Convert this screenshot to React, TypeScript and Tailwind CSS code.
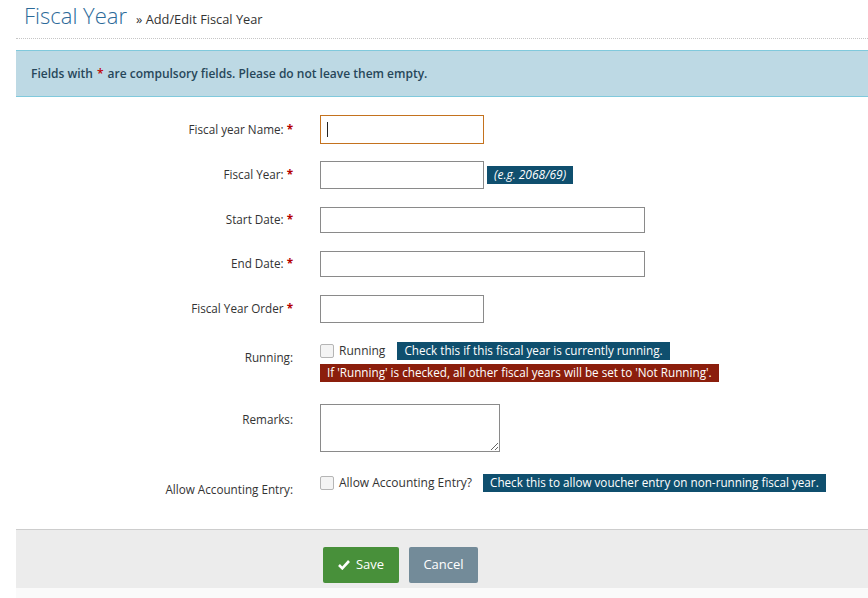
import React from "react";

const font = { fontFamily: '"Open Sans", "Noto Sans", sans-serif' };

function Req() {
  return <span className="text-[#b40000] font-bold ml-[3px]">*</span>;
}

function Label({ text, req, top }: { text: string; req?: boolean; top?: boolean }) {
  return (
    <div className={`w-[277px] shrink-0 text-right text-[11.7px] text-[#333] ${top ? "pt-[7px]" : ""}`}>
      {text}
      {req && <Req />}
    </div>
  );
}

function Badge({ children, red }: { children: React.ReactNode; red?: boolean }) {
  return (
    <span
      className={`inline-flex items-center h-[18px] px-[7px] text-[11.7px] text-white leading-none ${
        red ? "bg-[#8b1e0c]" : "bg-[#0f4f6e]"
      }`}
    >
      {children}
    </span>
  );
}

function Check() {
  return <span className="inline-block w-[14px] h-[14px] border border-[#b5b5b5] bg-[#f4f4f4] rounded-[2px]" />;
}

export default function App() {
  return (
    <div className="w-[868px] h-[598px] bg-white overflow-hidden" style={font}>
      <div className="flex items-baseline pl-[24px] h-[38px]">
        <h1 className="text-[22px] font-light text-[#2c6a99] leading-[30px]">Fiscal Year</h1>
        <span className="ml-[9px] text-[12.8px] text-[#333]">» Add/Edit Fiscal Year</span>
      </div>
      <div className="ml-[16px] border-t border-dotted border-[#c6c6c6]" />

      <div className="ml-[16px] mt-[11px] h-[47px] bg-[#bdd9e4] border-y border-[#80c9dc] flex items-center pl-[15px] text-[12px] font-semibold text-[#27475a]">
        Fields with <span className="text-[#c00000] mx-[4px]">*</span> are compulsory fields. Please do not leave them
        empty.
      </div>

      <div className="pl-[16px] pt-[18px]">
        <div className="flex items-center h-[29px]">
          <Label text="Fiscal year Name:" req />
          <div className="relative ml-[27px]">
            <input className="block w-[164px] h-[29px] border border-[#c4721e] outline-none" />
            <span className="absolute left-[7px] top-[7px] w-px h-[15px] bg-[#222]" />
          </div>
        </div>

        <div className="flex items-center h-[28px] mt-[17px]">
          <Label text="Fiscal Year:" req />
          <input className="ml-[27px] w-[164px] h-[28px] border border-[#8a8a8a] outline-none" />
          <span className="ml-[3px] inline-flex items-center h-[18px] px-[7px] bg-[#0f4f6e] text-white text-[12px] italic">
            (e.g. 2068/69)
          </span>
        </div>

        <div className="flex items-center h-[26px] mt-[18px]">
          <Label text="Start Date:" req />
          <input className="ml-[27px] w-[325px] h-[26px] border border-[#8a8a8a] outline-none" />
        </div>

        <div className="flex items-center h-[26px] mt-[18px]">
          <Label text="End Date:" req />
          <input className="ml-[27px] w-[325px] h-[26px] border border-[#8a8a8a] outline-none" />
        </div>

        <div className="flex items-center h-[28px] mt-[18px]">
          <Label text="Fiscal Year Order" req />
          <input className="ml-[27px] w-[164px] h-[28px] border border-[#8a8a8a] outline-none" />
        </div>

        <div className="flex items-start mt-[19px]">
          <Label text="Running:" top />
          <div className="ml-[27px] flex flex-col gap-[4px]">
            <div className="flex items-center h-[18px]">
              <Check />
              <span className="ml-[5px] text-[12px] text-[#333]">Running</span>
              <span className="ml-[12px] flex">
                <Badge>Check this if this fiscal year is currently running.</Badge>
              </span>
            </div>
            <div className="flex">
              <Badge red>If 'Running' is checked, all other fiscal years will be set to 'Not Running'.</Badge>
            </div>
          </div>
        </div>

        <div className="flex items-start mt-[22px]">
          <Label text="Remarks:" top />
          <textarea className="block ml-[27px] w-[180px] h-[48px] border border-[#8a8a8a] outline-none" />
        </div>

        <div className="flex items-start mt-[22px]">
          <Label text="Allow Accounting Entry:" top />
          <div className="ml-[27px] flex items-center h-[18px]">
            <Check />
            <span className="ml-[5px] text-[12px] text-[#333]">Allow Accounting Entry?</span>
            <span className="ml-[11px] flex">
              <Badge>Check this to allow voucher entry on non-running fiscal year.</Badge>
            </span>
          </div>
        </div>
      </div>

      <div className="ml-[16px] mt-[30px] h-[59px] bg-[#ececec] border-t border-[#cdcdcd] flex items-start pt-[17px] pl-[307px] gap-[10px]">
        <button className="w-[76px] h-[36px] bg-[#48903a] rounded-[2px] text-white text-[13px] flex items-center justify-center gap-[6px]">
          <svg width="12" height="11" viewBox="0 0 12 11">
            <path d="M1 6 L4.3 9.3 L11 2" stroke="white" strokeWidth="2.6" fill="none" />
          </svg>
          Save
        </button>
        <button className="w-[69px] h-[36px] bg-[#738b99] rounded-[2px] text-white text-[13px]">Cancel</button>
      </div>
      <div className="ml-[16px] h-[12px] bg-[#fafafa]" />
    </div>
  );
}
